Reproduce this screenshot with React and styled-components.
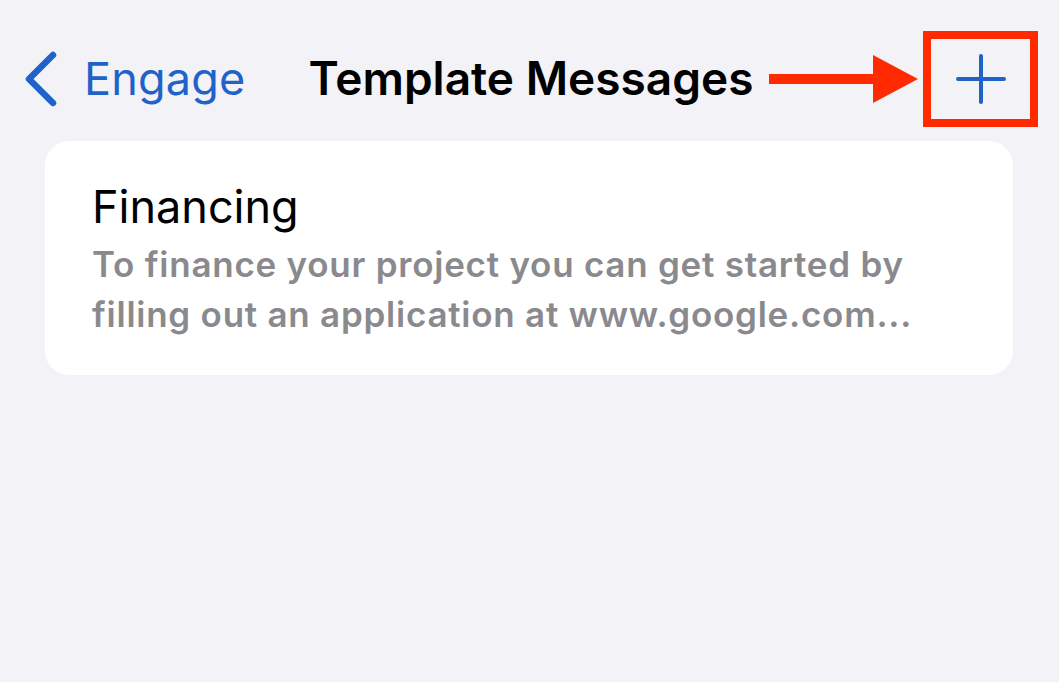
import React from "react"
import styled, { createGlobalStyle } from "styled-components"

const GlobalStyle = createGlobalStyle`
	html, body {
		margin: 0;
		padding: 0;
		background: #f2f2f7;
		font-family: Inter, "Noto Sans", sans-serif;
		-webkit-font-smoothing: antialiased;
	}
`;

const Blue = "#1f63c9";
const Red = "#ff2a00";

const App = () => {
	return (
		<React.Fragment>
			<GlobalStyle />
			<Page>
				<NavBar>
					<BackButton>
						<svg width="36" height="56" viewBox="0 0 36 56">
							<path d="M29 4 L5 28 L29 52" fill="none" stroke={Blue} strokeWidth="6.5" strokeLinecap="round" strokeLinejoin="round" />
						</svg>
						<BackLabel>Engage</BackLabel>
					</BackButton>
					<Title>Template Messages</Title>
					<RightGroup>
						<svg width="149" height="48" viewBox="0 0 149 48">
							<rect x="0" y="19" width="106" height="10" fill={Red} />
							<polygon points="104,0 149,24 104,48" fill={Red} />
						</svg>
						<Highlight>
							<svg width="50" height="50" viewBox="0 0 50 50">
								<path d="M25 2 V48 M2 25 H48" stroke={Blue} strokeWidth="4" strokeLinecap="round" />
							</svg>
						</Highlight>
					</RightGroup>
				</NavBar>
				<Card>
					<CardTitle>Financing</CardTitle>
					<Preview>
						<Line>To finance your project you can get started by</Line>
						<Line>filling out an application at www.google.com...</Line>
					</Preview>
				</Card>
			</Page>
		</React.Fragment>
	);
}

const Page = styled.div`
	width: 1059px;
	height: 682px;
	padding-top: 31px;
	box-sizing: border-box;
	overflow: hidden;
`;

const NavBar = styled.div`
	display: grid;
	grid-template-columns: 1fr auto 1fr;
	align-items: center;
	height: 96px;
	padding: 0 21px 0 24px;
`;

const BackButton = styled.div`
	display: flex;
	align-items: center;
	gap: 24px;
	color: ${Blue};
`;

const BackLabel = styled.span`
	font-size: 45px;
	font-weight: 400;
	letter-spacing: 0.2px;
	line-height: 1;
	padding-bottom: 2px;
`;

const Title = styled.div`
	font-size: 46px;
	font-weight: 600;
	color: #000;
	line-height: 1;
	padding-bottom: 2px;
`;

const RightGroup = styled.div`
	display: flex;
	align-items: center;
	justify-content: flex-end;
	gap: 5px;
`;

const Highlight = styled.div`
	width: 115px;
	height: 96px;
	box-sizing: border-box;
	border: 8px solid ${Red};
	display: flex;
	align-items: center;
	justify-content: center;
`;

const Card = styled.div`
	margin: 14px 46px 0 45px;
	height: 234px;
	box-sizing: border-box;
	background: #fff;
	border-radius: 24px;
	padding: 41px 47px 0;
`;

const CardTitle = styled.div`
	font-size: 45px;
	font-weight: 400;
	color: #000;
	line-height: 50px;
`;

const Preview = styled.div`
	margin-top: 7px;
	color: #8a8a8e;
	font-size: 35px;
	font-weight: 600;
	letter-spacing: 0.75px;
	line-height: 50px;
`;

const Line = styled.div`
	white-space: nowrap;
`;

export default App
